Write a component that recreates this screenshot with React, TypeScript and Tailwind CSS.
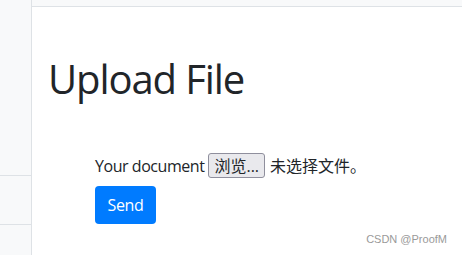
export default function App() {
  return (
    <div
      className="flex h-[255px] w-[462px] overflow-hidden bg-white text-[#212529]"
      style={{ fontFamily: '"Open Sans", "Noto Sans CJK SC", sans-serif' }}
    >
      {/* Sidebar */}
      <aside className="flex w-[32px] shrink-0 flex-col border-r border-[#dee2e6] bg-[#f8f9fa]">
        <div className="h-[175px] shrink-0" />
        <div className="h-[49px] shrink-0 border-t border-[#dee2e6]" />
        <div className="flex-1 border-t border-[#dee2e6]" />
      </aside>

      {/* Main */}
      <main className="flex flex-1 flex-col">
        <div className="h-[7px] shrink-0 border-b border-[#dee2e6] bg-[#f8f9fa]" />
        <div className="relative flex-1 px-4">
          <h1 className="mt-[48px] text-[40px] leading-[48px] font-normal tracking-[-1.1px]">Upload File</h1>

          <form className="mt-[50px] pl-[47px] text-[16px] leading-6">
            <div className="flex items-center">
              <span className="tracking-[-0.45px]">Your document</span>
              <span className="ml-[4px] flex h-[25px] items-center rounded-[3px] border border-[#8f8f9d] bg-[#e9e9ed] px-[5px] text-[16px]">
                浏览...
              </span>
              <span className="ml-[5px] text-[16px]">未选择文件。</span>
            </div>
            <button
              type="button"
              className="mt-[8px] h-[38px] w-[61px] rounded-[4px] bg-[#007bff] text-[16px] tracking-[-0.3px] text-white"
            >
              Send
            </button>
          </form>

          <span
            className="absolute right-[15px] bottom-[8px] text-[11px] text-[#9a9a9a]"
            style={{ fontFamily: '"Liberation Sans", sans-serif' }}
          >
            CSDN @ProofM
          </span>
        </div>
      </main>
    </div>
  );
}
